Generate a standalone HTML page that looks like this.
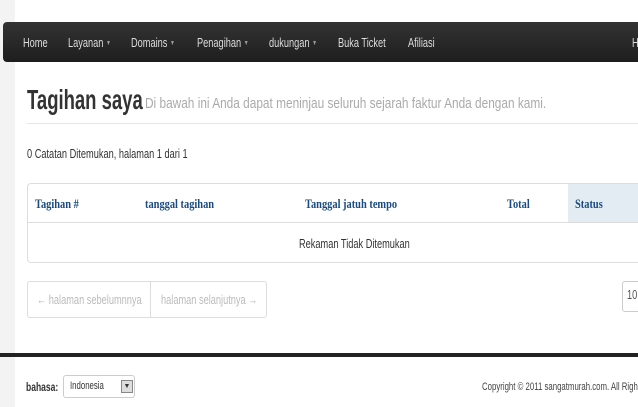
<!DOCTYPE html>
<html><head><style>
body{margin:0;width:638px;height:407px;overflow:hidden;background:#fff;font-family:"Liberation Sans",sans-serif;position:relative}
.c{position:absolute;white-space:nowrap;transform:scaleX(.71);transform-origin:0 0}
.strip{position:absolute;left:0;top:0;width:15px;height:407px;background:#f3f3f3}
.nav{position:absolute;left:3px;top:22px;width:645px;height:40px;background:linear-gradient(#333,#1e1e1e);border-radius:4px;overflow:hidden}
.nav .c{top:13px;color:#ddd;font-size:13px}
.car{font-size:7px;color:#999;font-style:normal;vertical-align:2px}
.hr{position:absolute;left:27px;top:123px;width:611px;height:1px;background:#e5e5e5}
.tbl{position:absolute;left:27px;top:183px;width:620px;height:78px;border:1px solid #ddd;border-radius:4px}
.th{position:absolute;top:12px;font-family:"Liberation Serif",serif;font-weight:bold;font-size:13px;color:#1a4a80;white-space:nowrap;transform:scaleX(.8);transform-origin:0 0}
.stat{position:absolute;left:540px;top:0;width:90px;height:38px;background:#e4ecf3}
.row{position:absolute;left:0;top:38px;width:100%;border-top:1px solid #ddd}
.pg{position:absolute;left:27px;top:281px;height:35px;width:238px;border:1px solid #ddd;border-radius:3px;font-size:13px;color:#bbb}
.sel{position:absolute;left:622px;top:281px;width:30px;height:29px;border:1px solid #ccc;border-radius:3px;font-size:13px;color:#555}
.foot{position:absolute;left:0;top:353px;width:638px;height:4px;background:#222}
.dd{position:absolute;left:63px;top:375px;width:70px;height:21px;border:1px solid #ccc;border-radius:3px;font-size:11px;color:#333}
</style></head><body>
<div class="strip"></div>
<div class="nav">
<span class="c" style="left:20px">Home</span>
<span class="c" style="left:65px">Layanan <i class="car">▼</i></span>
<span class="c" style="left:128px">Domains <i class="car">▼</i></span>
<span class="c" style="left:194px">Penagihan <i class="car">▼</i></span>
<span class="c" style="left:266px">dukungan <i class="car">▼</i></span>
<span class="c" style="left:335px">Buka Ticket</span>
<span class="c" style="left:405px">Afiliasi</span>
<span class="c" style="left:629px">H</span>
</div>
<div class="c" style="left:27px;top:84px;font-size:28px;font-weight:bold;color:#333;transform:scaleX(.66)">Tagihan saya</div>
<div class="c" style="left:145px;top:95px;font-size:15px;color:#aaa;transform:scaleX(.79)">Di bawah ini Anda dapat meninjau seluruh sejarah faktur Anda dengan kami.</div>
<div class="hr"></div>
<div class="c" style="left:27px;top:146px;font-size:13px;color:#333">0 Catatan Ditemukan, halaman 1 dari 1</div>
<div class="tbl">
<div class="stat"></div>
<div class="th" style="left:7px">Tagihan #</div>
<div class="th" style="left:117px">tanggal tagihan</div>
<div class="th" style="left:277px">Tanggal jatuh tempo</div>
<div class="th" style="left:479px">Total</div>
<div class="th" style="left:547px">Status</div>
<div class="row"><span class="c" style="left:271px;top:13px;font-size:13px;color:#333">Rekaman Tidak Ditemukan</span></div>
</div>
<div class="pg"><span class="c" style="left:9px;top:10px">← halaman sebelumnnya</span><div style="position:absolute;left:122px;top:0;width:1px;height:35px;background:#ddd"></div><span class="c" style="left:133px;top:10px">halaman selanjutnya →</span></div>
<div class="sel"><span class="c" style="left:4px;top:5px">10</span></div>
<div class="foot"></div>
<div class="c" style="left:26px;top:380px;font-size:12px;color:#333;font-weight:bold">bahasa:</div>
<div class="dd"><span class="c" style="left:6px;top:4px">Indonesia</span><span style="position:absolute;left:57px;top:4px;width:10px;height:11px;background:#ddd;border:1px solid #888;font-size:7px;text-align:center;line-height:11px">▼</span></div>
<div class="c" style="left:482px;top:381px;font-size:11px;color:#444">Copyright © 2011 sangatmurah.com. All Rights</div>
</body></html>
